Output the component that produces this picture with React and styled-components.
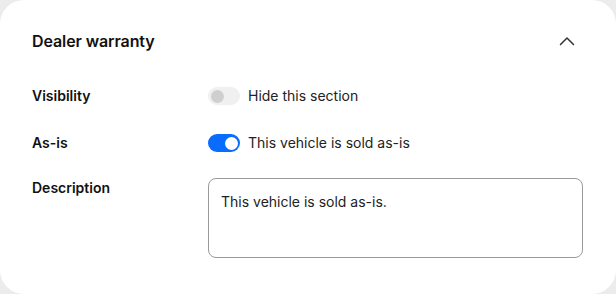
import React, { useState } from 'react';
import styled, { createGlobalStyle } from 'styled-components';

const GlobalStyle = createGlobalStyle`
  html, body {
    margin: 0;
    padding: 0;
    background: #ececec;
  }
  * {
    box-sizing: border-box;
  }
`;

const App = () => {
  const [hidden, setHidden] = useState(false);
  const [asIs, setAsIs] = useState(true);

  return (
    <>
      <GlobalStyle />
      <Card>
        <Header>
          <Title>Dealer warranty</Title>
          <Collapse aria-label="Collapse">
            <svg width="16" height="10" viewBox="0 0 16 10" fill="none">
              <path d="M1.5 8.5L8 2L14.5 8.5" stroke="#333" strokeWidth="1.5" strokeLinecap="round" strokeLinejoin="round" />
            </svg>
          </Collapse>
        </Header>
        <Rows>
          <Row>
            <Label>Visibility</Label>
            <Field>
              <Switch $on={hidden} onClick={() => setHidden(!hidden)}>
                <Knob $on={hidden} />
              </Switch>
              <Value>Hide this section</Value>
            </Field>
          </Row>
          <Row>
            <Label>As-is</Label>
            <Field>
              <Switch $on={asIs} onClick={() => setAsIs(!asIs)}>
                <Knob $on={asIs} />
              </Switch>
              <Value>This vehicle is sold as-is</Value>
            </Field>
          </Row>
          <Row $top>
            <Label>Description</Label>
            <TextBox defaultValue="This vehicle is sold as-is." />
          </Row>
        </Rows>
      </Card>
    </>
  );
};

export default App;

const Card = styled.div`
  width: 616px;
  height: 294px;
  background: #fff;
  border-radius: 24px;
  padding: 24px 33px 36px 32px;
  font-family: Inter, 'Noto Sans', sans-serif;
  color: #111;
  display: flex;
  flex-direction: column;
`;

const Header = styled.div`
  display: flex;
  align-items: center;
  justify-content: space-between;
  height: 34px;
  flex-shrink: 0;
`;

const Title = styled.div`
  font-size: 16px;
  font-weight: 600;
  letter-spacing: -0.1px;
`;

const Collapse = styled.button`
  border: none;
  background: none;
  padding: 0;
  width: 24px;
  height: 24px;
  margin-right: 4px;
  display: flex;
  align-items: center;
  justify-content: center;
  cursor: pointer;
`;

const Rows = styled.div`
  margin-top: 26px;
  display: flex;
  flex-direction: column;
  gap: 23px;
  flex-shrink: 0;
`;

const Row = styled.div`
  display: grid;
  grid-template-columns: 176px 1fr;
  align-items: ${(p) => (p.$top ? 'start' : 'center')};
  min-height: 24px;
`;

const Label = styled.div`
  font-size: 14px;
  font-weight: 600;
  line-height: 20px;
`;

const Field = styled.div`
  display: flex;
  align-items: center;
  gap: 8px;
`;

const Switch = styled.button`
  position: relative;
  width: 32px;
  height: 18px;
  border-radius: 9px;
  border: none;
  padding: 0;
  background: ${(p) => (p.$on ? '#0a6cff' : '#f0f0f0')};
  cursor: pointer;
`;

const Knob = styled.span`
  position: absolute;
  top: 2.5px;
  left: ${(p) => (p.$on ? '16.5px' : '2.5px')};
  width: 13px;
  height: 13px;
  border-radius: 50%;
  background: ${(p) => (p.$on ? '#fff' : '#cfcfcf')};
`;

const Value = styled.span`
  font-size: 14px;
  line-height: 20px;
  color: #222;
`;

const TextBox = styled.textarea`
  width: 375px;
  height: 80px;
  resize: none;
  border: 1px solid #9a9a9a;
  border-radius: 8px;
  padding: 13px 12px;
  font-family: Inter, 'Noto Sans', sans-serif;
  font-size: 14px;
  line-height: 20px;
  color: #222;
  outline: none;
`;
